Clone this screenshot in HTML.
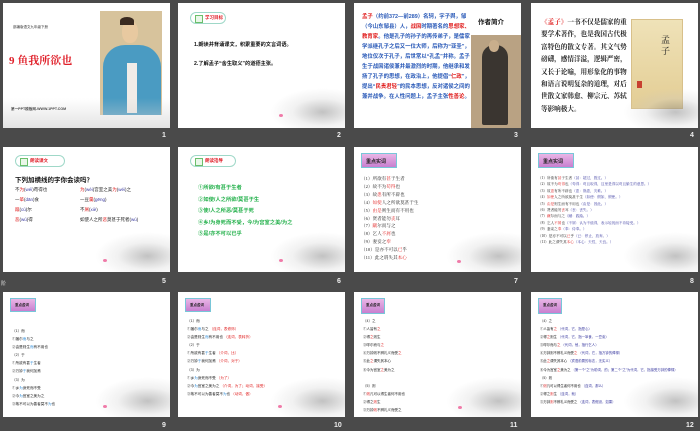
<!DOCTYPE html>
<html><head><meta charset="utf-8"><style>
*{margin:0;padding:0;box-sizing:border-box}
body{width:700px;height:431px;background:#4a4a4a;position:relative;overflow:hidden;font-family:"Liberation Sans","Noto Sans CJK SC",sans-serif}
.s{position:absolute;width:167px;height:125px;background:#fff;overflow:hidden}
.n{position:absolute;color:#eee;font-size:7px;font-weight:bold}
.a{position:absolute;white-space:nowrap}
.lotus{position:absolute;right:0;bottom:0;width:75px;height:40px;background:radial-gradient(ellipse at 70% 60%,rgba(120,120,120,.45),rgba(200,200,200,.25) 40%,rgba(255,255,255,0) 70%)}
.pk{position:absolute;width:4px;height:3px;border-radius:50%;background:#f07aa8}
.badge{position:absolute;left:12px;top:10px;width:48px;height:12px;border:1px solid #9fd8c8;border-radius:7px;font-size:4.5px;color:#e0202a;font-weight:bold;padding:2px 0 0 14px}
.badge:before{content:"";position:absolute;left:4px;top:2px;width:6px;height:6px;border:1px solid #6bbf6b;background:#e9f7e9}
.pb{position:absolute;left:8px;top:8px;width:34px;height:15px;background:linear-gradient(#e9b6e6,#c87fcf);border:1px solid #78c6d8;font-size:5px;font-weight:bold;color:#222;padding:4px 0 0 4px}
.t{font-size:4.3px;line-height:8px;color:#222}
.r{color:#e02020}.b{color:#2a8ad8}.v{color:#3a3aa0}
</style></head><body>

<!-- 1 -->
<div class="s" style="left:3px;top:3px">
<div class="a" style="left:10px;top:22px;font-size:3.5px;color:#333">部编版语文九年级下册</div>
<div class="a" style="left:6px;top:49px;font-size:11px;font-weight:bold;color:#e0202a;font-family:'Liberation Serif','Noto Serif CJK SC',serif">9 鱼我所欲也</div>
<div class="a" style="left:97px;top:8px;width:62px;height:104px;background:#d7c39c"></div>
<div class="a" style="left:100px;top:42px;width:58px;height:70px;background:#4a9bc2;border-radius:22px 22px 0 0"></div>
<div class="a" style="left:119px;top:18px;width:16px;height:22px;background:#e8c9a0;border-radius:45%"></div>
<div class="a" style="left:117px;top:14px;width:14px;height:8px;background:#3a2a20;border-radius:50% 50% 0 0"></div>
<div class="a" style="left:124px;top:60px;width:10px;height:50px;background:#f0ece8"></div>
<div class="a" style="left:8px;top:104px;font-size:3.6px;color:#222;font-weight:bold">第一PPT模板网-WWW.1PPT.COM</div>
<div class="lotus" style="width:167px;height:30px;background:linear-gradient(rgba(255,255,255,0),rgba(210,210,210,.6))"></div>
</div>
<div class="n" style="left:162px;top:132px">1</div>

<!-- 2 -->
<div class="s" style="left:178px;top:3px">
<div class="badge" style="left:12px;top:9px;width:36px">学习目标</div>
<div class="a" style="left:16px;top:38px;font-size:5.2px;font-weight:bold;color:#111">1.朗读并背诵课文，积累重要的文言词语。</div>
<div class="a" style="left:16px;top:57px;font-size:5.2px;font-weight:bold;color:#111">2.了解孟子“舍生取义”的道德主张。</div>
<div class="lotus"></div><div class="pk" style="left:101px;top:111px"></div>
</div>
<div class="n" style="left:337px;top:132px">2</div>

<!-- 3 -->
<div class="s" style="left:354px;top:3px">
<div class="a t" style="left:8px;top:9px;width:108px;white-space:normal;line-height:10px;font-size:5.4px;font-weight:bold;color:#2a5ab8"><span class="r">孟子</span>（约前372—前289）名轲，字子舆，邹（今山东邹县）人，<span class="r">战国</span>时期著名的<span class="r">思想家、教育家</span>。他是孔子的孙子的再传弟子，是儒家学派继孔子之后又一位大师，后称为“亚圣”，地位仅次于孔子，后世常以“孔孟”并称。孟子生于战国诸侯兼并最激烈的时期，他继承和发扬了孔子的思想，在政治上，他提倡“<span class="r">仁政</span>”，提出“<span class="r">民贵君轻</span>”的民本思想，反对诸侯之间的兼并战争。在人性问题上，孟子主张<span class="r">性善论</span>。</div>
<div class="a" style="left:124px;top:13px;font-size:6.5px;font-weight:bold;color:#111">作者简介</div>
<div class="a" style="left:117px;top:32px;width:50px;height:93px;background:#b9a283"></div>
<div class="a" style="left:128px;top:42px;width:26px;height:80px;background:#3a3530;border-radius:12px 12px 2px 2px"></div>
<div class="a" style="left:135px;top:37px;width:10px;height:12px;background:#c9ae8c;border-radius:45%"></div>
</div>
<div class="n" style="left:514px;top:132px">3</div>

<!-- 4 -->
<div class="s" style="left:531px;top:3px">
<div class="a" style="left:10px;top:14px;width:86px;white-space:normal;font-size:6.6px;line-height:12.4px;font-weight:bold;color:#222;font-family:'Liberation Serif','Noto Serif CJK SC',serif"><span class="r">《孟子》</span>一书不仅是儒家的重要学术著作，也是我国古代极富特色的散文专著。其文气势磅礴，感情洋溢，逻辑严密，又长于论喻，用形象化的事物和语言说明复杂的道理，对后世散文家韩愈、柳宗元、苏轼等影响极大。</div>
<div class="a" style="left:100px;top:16px;width:52px;height:90px;background:linear-gradient(#efe2b8,#e3cd94);border:1px solid #d8c08a"></div>
<div class="a" style="left:130px;top:32px;font-size:9px;line-height:11px;width:10px;white-space:normal;color:#222;font-family:'Liberation Serif','Noto Serif CJK SC',serif">孟子</div>
<div class="a" style="left:106px;top:78px;width:5px;height:7px;background:#c84030"></div>
<div class="lotus"></div>
</div>
<div class="n" style="left:690px;top:132px">4</div>

<!-- 5 -->
<div class="s" style="left:3px;top:147px">
<div class="badge" style="left:12px;top:8px;width:50px">朗读课文</div>
<div class="a" style="left:12px;top:27px;font-size:6.5px;font-weight:bold;color:#111">下列加横线的字你会读吗？</div>
<div class="a t" style="left:12px;top:38px;line-height:10px;font-size:4.5px">不<span class="r">为</span>(<span class="v">wéi</span>)苟得也<br>一<span class="r">箪</span>(<span class="v">dān</span>)食<br><span class="r">蹴</span>(<span class="v">cù</span>)尔<br><span class="r">恶</span>(<span class="v">wù</span>)得</div>
<div class="a t" style="left:77px;top:38px;line-height:10px;font-size:4.5px"><span class="r">为</span>(<span class="v">wèi</span>)宫室之美<span class="r">为</span>(<span class="v">wéi</span>)之<br>一豆<span class="r">羹</span>(<span class="v">gēng</span>)<br>不<span class="r">屑</span>(<span class="v">xiè</span>)<br>如使人之所<span class="r">恶</span>莫甚于死者(<span class="v">wù</span>)</div>
<div class="lotus"></div><div class="pk" style="left:100px;top:112px"></div>
</div>
<div class="a" style="left:1px;top:280px;font-size:5px;color:#ddd">阶</div>
<div class="n" style="left:162px;top:278px">5</div>

<!-- 6 -->
<div class="s" style="left:178px;top:147px">
<div class="badge" style="left:12px;top:8px;width:46px">朗读指导</div>
<div class="a" style="left:20px;top:36px;font-size:5.3px;line-height:11.6px;font-weight:bold;color:#22b04a">①所欲/有甚于生者<br>②如使/人之所欲/莫甚于生<br>③使/人之所恶/莫甚于死<br>④乡/为身死而不受，今/为宫室之美/为之<br>⑤是/亦不可以已乎</div>
<div class="lotus"></div><div class="pk" style="left:101px;top:112px"></div>
</div>
<div class="n" style="left:337px;top:278px">6</div>

<!-- 7 -->
<div class="s" style="left:354px;top:147px">
<div class="pb" style="left:7px;top:6px;width:36px">重点实词</div>
<div class="a t" style="left:7px;top:28px;font-size:4.6px;line-height:7.9px;font-family:'Liberation Serif','Noto Serif CJK SC',serif">（1）所欲有<span class="r">甚</span>于生者<br>（2）故不为<span class="r">苟得</span>也<br>（3）故<span class="r">患</span>有所不辟也<br>（4）<span class="r">如使</span>人之所欲莫甚于生<br>（5）<span class="r">由是</span>则生而有不用也<br>（6）贤者能勿<span class="r">丧</span>耳<br>（7）<span class="r">蹴</span>尔而与之<br>（8）乞人<span class="r">不屑</span>也<br>（9）妻妾之<span class="r">奉</span><br>（10）是亦不可以<span class="r">已</span>乎<br>（11）此之谓失其<span class="r">本心</span></div>
<div class="lotus"></div><div class="pk" style="left:103px;top:113px"></div>
</div>
<div class="n" style="left:514px;top:278px">7</div>

<!-- 8 -->
<div class="s" style="left:531px;top:147px">
<div class="pb" style="left:7px;top:6px;width:36px">重点实词</div>
<div class="a t" style="left:7px;top:28px;font-size:3.6px;line-height:6.4px;width:152px;white-space:normal;font-family:'Liberation Serif','Noto Serif CJK SC',serif">（1）所欲有<span class="r">甚</span>于生者<span class="v">（甚：超过，胜过。）</span><br>（2）故不为<span class="r">苟得</span>也<span class="v">（苟得：苟且取得，这里是得以苟且偷生的意思。）</span><br>（3）故<span class="r">患</span>有所不辟也<span class="v">（患：祸患，灾难。）</span><br>（4）<span class="r">如使</span>人之所欲莫甚于生<span class="v">（如使：假如，假使。）</span><br>（5）<span class="r">由是</span>则生而有不用也<span class="v">（由是：因此。）</span><br>（6）贤者能勿<span class="r">丧</span>耳<span class="v">（丧：丧失。）</span><br>（7）<span class="r">蹴</span>尔而与之<span class="v">（蹴：践踏。）</span><br>（8）乞人<span class="r">不屑</span>也<span class="v">（不屑：认为不值得，表示轻视而不肯接受。）</span><br>（9）妻妾之<span class="r">奉</span><span class="v">（奉：侍奉。）</span><br>（10）是亦不可以<span class="r">已</span>乎<span class="v">（已：停止，放弃。）</span><br>（11）此之谓失其<span class="r">本心</span><span class="v">（本心：天性，天良。）</span></div>
<div class="lotus"></div>
</div>
<div class="n" style="left:690px;top:278px">8</div>

<!-- 9 -->
<div class="s" style="left:3px;top:292px">
<div class="pb" style="left:7px;top:6px;width:26px;height:14px;font-size:3.5px">重点虚词</div>
<div class="a t" style="left:9px;top:35px;font-size:3.6px;line-height:8.1px">（1）而<br>①蹴尔<span class="b">而</span>与之<br>②由是则生<span class="b">而</span>有不用也<br>（2）于<br>①所欲有甚<span class="b">于</span>生者<br>②万钟<span class="b">于</span>我何加焉<br>（3）为<br>①乡<span class="b">为</span>身死而不受<br>②今<span class="b">为</span>宫室之美为之<br>③故不可以为善者莫不<span class="b">为</span>也</div>
<div class="lotus"></div><div class="pk" style="left:100px;top:113px"></div>
</div>
<div class="n" style="left:162px;top:422px">9</div>

<!-- 10 -->
<div class="s" style="left:178px;top:292px">
<div class="pb" style="left:7px;top:6px;width:26px;height:14px;font-size:3.5px">重点虚词</div>
<div class="a t" style="left:9px;top:25px;font-size:3.6px;line-height:8.1px">（1）而<br>①蹴尔<span class="b">而</span>与之 <span class="r">（连词，表修饰）</span><br>②由是则生<span class="b">而</span>有不用也 <span class="r">（连词，表转折）</span><br>（2）于<br>①所欲有甚<span class="b">于</span>生者 <span class="r">（介词，比）</span><br>②万钟<span class="b">于</span>我何加焉 <span class="r">（介词，对于）</span><br>（3）为<br>①乡<span class="b">为</span>身死而不受 <span class="r">（为了）</span><br>②今<span class="b">为</span>宫室之美为之 <span class="r">（介词，为了；动词，接受）</span><br>③故不可以为善者莫不<span class="b">为</span>也 <span class="r">（动词，做）</span></div>
<div class="lotus"></div><div class="pk" style="left:100px;top:113px"></div>
</div>
<div class="n" style="left:334px;top:422px">10</div>

<!-- 11 -->
<div class="s" style="left:354px;top:292px">
<div class="pb" style="left:7px;top:6px;width:24px;height:16px;font-size:3.5px">重点虚词</div>
<div class="a t" style="left:9px;top:25px;font-size:3.5px;line-height:8.1px">（4）之<br>①人皆有<span class="r">之</span><br>②得<span class="r">之</span>则生<br>③呼尔而与<span class="r">之</span><br>④万钟则不辨礼义而受<span class="r">之</span><br>⑤此<span class="r">之</span>谓失其本心<br>⑥今为宫室<span class="r">之</span>美为之<br><br>（5）则<br>①<span class="r">则</span>凡可以得生者何不用也<br>②得之<span class="r">则</span>生<br>③万钟<span class="r">则</span>不辨礼义而受之</div>
<div class="lotus"></div><div class="pk" style="left:104px;top:114px"></div>
</div>
<div class="n" style="left:510px;top:422px">11</div>

<!-- 12 -->
<div class="s" style="left:531px;top:292px">
<div class="pb" style="left:7px;top:6px;width:24px;height:16px;font-size:3.5px">重点虚词</div>
<div class="a t" style="left:9px;top:25px;font-size:3.4px;line-height:8.1px;width:150px;white-space:normal">（4）之<br>①人皆有<span class="r">之</span> <span class="v">（代词，它，指是心）</span><br>②得<span class="r">之</span>则生 <span class="v">（代词，它，指一箪食，一豆羹）</span><br>③呼尔而与<span class="r">之</span> <span class="v">（代词，他，指行乞人）</span><br>④万钟则不辨礼义而受<span class="r">之</span> <span class="v">（代词，它，指万钟的俸禄）</span><br>⑤此<span class="r">之</span>谓失其本心 <span class="v">（宾语前置的标志，无实义）</span><br>⑥今为宫室<span class="r">之</span>美为之 <span class="v">（第一个“之”为助词，的；第二个“之”为代词，它，指接受万钟的俸禄）</span><br>（5）则<br>①<span class="r">则</span>凡可以得生者何不用也 <span class="v">（连词，那么）</span><br>②得之<span class="r">则</span>生 <span class="v">（连词，就）</span><br>③万钟<span class="r">则</span>不辨礼义而受之 <span class="v">（连词，表假设，如果）</span></div>
<div class="lotus"></div>
</div>
<div class="n" style="left:686px;top:422px">12</div>

</body></html>
